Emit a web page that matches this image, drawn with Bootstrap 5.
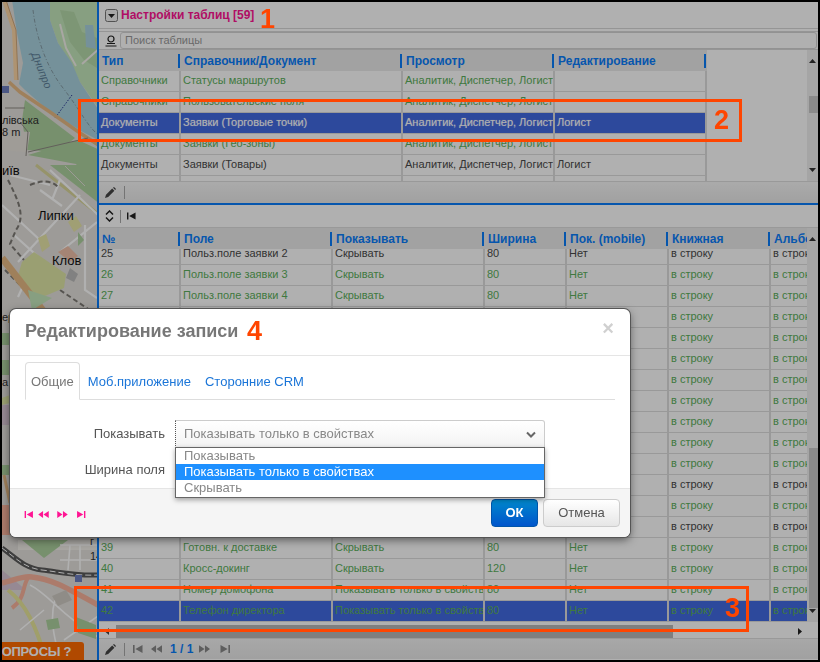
<!DOCTYPE html>
<html lang="ru">
<head>
    <meta charset="UTF-8">
    <meta name="viewport" content="width=device-width, initial-scale=1.0">
    <title>Настройки таблиц</title>
    <link href="https://cdn.jsdelivr.net/npm/bootstrap@5.3.2/dist/css/bootstrap.min.css" rel="stylesheet">
    <style>
        html, body { height: 100%; }
        body { background: #000; overflow: hidden; font-family: "Liberation Sans", Arial, sans-serif; font-size: 11px; }
        .app-frame { width: 816px; height: 658px; margin: 2px; background: #fff; }
        .map-pane { width: 95px; flex: none; overflow: hidden; }
        .map-pane svg { display: block; }
        .map-pane text { font-family: "Liberation Sans", Arial, sans-serif; }
        .work-pane { width: 721px; flex: none; border-left: 2px solid #0a7dfb; min-width: 0; }
        .title-bar { height: 27px; padding-left: 6px; gap: 3px; border-bottom: 1px solid #d8d8d8; }
        .title-text { color: #ff1493; font-size: 12px; font-weight: 700; }
        .search-bar { height: 19px; margin-top: 2px; border-top: 1px solid #d8d8d8; border-bottom: 1px solid #d8d8d8; padding-left: 6px; gap: 3px; }
        .search-box { flex: 1; height: 17px; margin-right: 1px; border: 1px solid #d4d4d4; border-radius: 3px; padding: 0 4px; font-size: 11px; line-height: 15px; color: #9a9a9a; }
        .grid-wrap { overflow: hidden; flex: 1; min-width: 0; }
        .grid-tbl.table { table-layout: fixed; margin: 0; border-collapse: separate; border-spacing: 0; color: #4a4a4a; font-size: 11px; }
        .grid-tbl.table > thead > tr > th { height: 21px; padding: 0 3px; font-size: 12px; font-weight: 700; line-height: 14px; color: #0a7dfb; background-color: #ebebeb;
            background-image: linear-gradient(#0a7dfb, #0a7dfb); background-size: 2px 14px; background-repeat: no-repeat; background-position: right 1px center; border: 0; white-space: nowrap; overflow: hidden; vertical-align: middle; }
        .grid-tbl.table > tbody > tr > td { height: 21px; padding: 0 2px; border: 0; border-right: 2px solid #dedede; border-bottom: 1px solid #dedede; background: #fff; white-space: nowrap; overflow: hidden; line-height: 19px; vertical-align: top; color: inherit; box-shadow: none; }
        .grid-tbl.table > tbody > tr.row-green > td { color: #5cb05c; }
        .grid-tbl.table > tbody > tr.row-sel > td { background: #426ae2; color: #fff; text-shadow: 0 0 1px rgba(255,255,255,.5); }
        .grid-tbl.table > tbody > tr.row-sel.row-green > td { color: #5cb05c; text-shadow: none; }
        .grid-tbl.table > tbody > tr.row-cut > td { height: 16px; line-height: 9px; }
        .grid-tbl.table > tbody > tr.row-stub > td { height: 6px; line-height: 6px; border-bottom: 0; }
        .top-grid { height: 132px; border-bottom: 1px solid #dedede; }
        .top-grid .grid-tbl { width: 608px; }
        .bottom-grid { height: 394px; }
        .bottom-grid .grid-tbl { width: 776px; }
        .vbar { width: 11px; flex: none; background: #efefef; }
        .vbar-thumb { background: #c9c9c9; margin-left: 2px; }
        .bar-arrow { flex: none; }
        .tool-bar { height: 21px; padding-left: 6px; gap: 6px; background: linear-gradient(#f7f7f7, #e9e9e9); }
        .tool-sep { width: 1px; height: 13px; background: #a8a8a8; margin: 0 2px; }
        .blue-rule { height: 2px; background: #0a7dfb; flex: none; }
        .tool-plain { height: 23px; padding-left: 6px; gap: 4px; background: #fff; border-bottom: 1px solid #dedede; }
        .hbar { height: 17px; flex: none; padding-top: 2px; background: #fff; border-bottom: 1px solid #dedede; width: 709px; }
        .hbar-thumb { width: 557px; height: 13px; margin-left: 4px; background: #b9b9b9; }
        .pager-num { color: #0a7dfb; font-size: 12px; font-weight: 700; margin-left: 2px; }
        .pager-near { margin-left: 2px; }
        .pager-foot { height: 20px; background: linear-gradient(#f3f3f3, #e9e9e9); }
        .ask-btn { left: 2px; top: 642px; width: 82px; height: 18px; background: #ff6a00; color: #fff; font-size: 13px; font-weight: 700; line-height: 20px; letter-spacing: -.3px; border-radius: 0 3px 0 0; overflow: hidden; white-space: nowrap; z-index: 10; }
        .ask-text { margin-left: -9px; }
        .modal-backdrop.dim-layer { --bs-backdrop-opacity: .31; --bs-backdrop-zindex: 1050; }
        .edit-dialog { left: 10px; top: 309px; width: 620px; height: 228px; z-index: 1060; }
        .edit-dialog .modal-content { height: 100%; background: #fff; border: 0; border-radius: 6px; box-shadow: 0 0 0 1px #555, 0 3px 8px rgba(0,0,0,.5); color: #555; }
        .edit-dialog .modal-header { height: 47px; flex: none; padding: 0 16px 0 15px; border-bottom: 1px solid #e5e5e5; }
        .dialog-title { font-size: 18px; font-weight: 700; color: #777; margin: 0; }
        .dialog-close { font-size: 20px; line-height: 20px; font-weight: 700; color: #d0d0d0; margin-top: -9px; margin-right: 0; }
        .edit-dialog .modal-body { flex: 1; padding: 6px 15px 0; font-size: 13px; }
        .edit-tabs { height: 38px; border-bottom: 1px solid #ddd; font-size: 13px; flex-wrap: nowrap; }
        .edit-tabs .nav-link { height: 38px; padding: 0 5px; line-height: 38px; margin-right: 2px; color: #1a75d8; border-radius: 4px 4px 0 0; }
        .edit-tabs .nav-link.active { color: #777; border-color: #ddd #ddd #fff; }
        .field-row { gap: 10px; }
        .field-label { width: 140px; text-align: right; flex: none; color: #555; font-size: 13px; }
        .field-select { width: 370px; height: 28px; padding: 0 8px; border: 1px solid #ccc; border-left: 1px dotted #555; border-radius: 0 3px 0 0; background: linear-gradient(#fff, #f3f3f3); color: #888; font-size: 13px; line-height: 26px; }
        .select-list { left: 165px; top: 138px; width: 370px; border: 1px solid #666; border-radius: 0; background: #fff; box-shadow: 0 2px 5px rgba(0,0,0,.35); z-index: 5; font-size: 13px; line-height: 16.7px; color: #888; }
        .select-list .list-group-item { border: 0; border-radius: 0; padding: 0 8px; background: transparent; color: inherit; }
        .select-list .list-group-item.active { background: #1e90ff; color: #fff; }
        .edit-dialog .modal-footer { height: 49px; flex: none; padding: 0 10px 0 14px; background: #f5f5f5; border-top: 1px solid #e5e5e5; border-radius: 0 0 6px 6px; flex-wrap: nowrap; justify-content: space-between; margin-top: auto; }
        .dialog-pager { fill: #ff1493; margin-top: 2px; }
        .dialog-btns { gap: 5px; }
        .btn-ok, .btn-cancel { height: 28px; padding: 0; font-size: 13px; line-height: 26px; border-radius: 4px; margin: 0; }
        .btn-ok { width: 47px; background: linear-gradient(#0088cc, #0055cc); border: 1px solid #0055aa; color: #fff; font-weight: 700; }
        .btn-cancel { width: 77px; background: linear-gradient(#fff, #e6e6e6); border: 1px solid #ccc; color: #555; }
        .mark-box { border: 3px solid #ff4500; z-index: 1080; pointer-events: none; }
        .mark-num { color: #ff4500; font-size: 27px; font-weight: 700; line-height: 27px; z-index: 1080; font-family: "Liberation Sans", Arial, sans-serif; }
    </style>
</head>
<body>
    <svg width="0" height="0" class="position-absolute">
        <defs>
            <symbol id="ic-first" viewBox="0 0 10 8"><path d="M0 0h1.6v8H0zM9.5 0v8L2.4 4z"/></symbol>
            <symbol id="ic-prev" viewBox="0 0 12 8"><path d="M5.5 0v8L0 4zM12 0v8L6 4z" /></symbol>
            <symbol id="ic-next" viewBox="0 0 12 8"><path d="M0 0v8l6-4zM6.5 0v8L12 4z"/></symbol>
            <symbol id="ic-last" viewBox="0 0 10 8"><path d="M8.4 0H10v8H8.4zM.5 0v8l7.1-4z"/></symbol>
            <symbol id="ic-pen" viewBox="0 0 11 11"><path d="M0 11l1-3.2L7.2 1.6l2.2 2.2L3.2 10zM8 .8L9 0l2 2-.8 1z" /></symbol>
        </defs>
    </svg>

    <div class="app-frame d-flex position-relative">
        <!-- Map -->
        <div class="map-pane">
            <svg width="95" height="658" viewBox="2 2 95 658">
                <rect x="0" y="0" width="100" height="662" fill="#e4e1dc"/>
                <path d="M50 0L100 0 100 110 80 82 70 62 58 43 50 20z" fill="#c4e6bb"/>
                <path d="M60 10l14 2 8 20 15 6v30L84 60 70 42z" fill="#add19e" opacity=".6"/>
                <path d="M85 25l8 0 3 24-10-2z" fill="#aad3df"/>
                <path d="M12 0L50 0 50 20 58 43 72 63 80 82 100 112 100 141 83 132 50 112 25 90 19 84 23 63 17 33z" fill="#aad3df"/>
                <path d="M82 64L100 48M60 24l6 24 10 18" stroke="#f4f2ec" stroke-width="2" fill="none"/>
                <path d="M33 10c3 25 12 55 30 78s25 40 37 48" stroke="#7a8b95" stroke-width=".8" stroke-dasharray="4 2 1 2" fill="none"/>
                <path d="M72 95L55 118" stroke="#2d3b9a" stroke-width="1" stroke-dasharray="1.5 1.5" fill="none"/>
                <path d="M25 100l50 38-18 14-30-2-5-30z" fill="#add19e"/>
                <path d="M28 155L78 140 100 150 100 200 76 164z" fill="#add19e"/>
                <path d="M50 165L100 165 100 204z" fill="#add19e"/>
                <path d="M85 186l-20-20" stroke="#e3e0d8" stroke-width="1"/>
                <path d="M4 0L14 30 16 80" stroke="#fcd6a4" stroke-width="4" fill="none"/>
                <path d="M4 0L14 30 16 80" stroke="#c99a6a" stroke-width=".8" fill="none" transform="translate(2 0)"/>
                <path d="M9 82L20 92 50 112 80 133 100 146" stroke="#e7ba85" stroke-width="3.5" fill="none"/>
                <path d="M36 165L60 184 97 213" stroke="#d9d69a" stroke-width="3" fill="none"/>
                <path d="M0 130L30 132 27 152 0 150z" fill="#e6e2db"/>
                <path d="M20 122l8 10-2 24M28 152l60-14M5 108h20" stroke="#8f8a84" stroke-width="1" fill="none"/>
                <!-- Липки -->
                <path d="M2 205L40 240M18 262L80 195M50 170L98 215M14 235l50 45M60 252L97 222M85 225V290l12 8M10 175l40 10M28 275l-10 22M60 180l-8 20M40 190l22 16" stroke="#fff" stroke-width="2.2" fill="none"/>
                <path d="M8 180c10 20 18 36 8 50l-6 14 14 16M30 185c10-4 20-6 28 2M60 290L97 315M5 270l40 40" stroke="#7d7a75" stroke-width="2" stroke-dasharray="5 3" fill="none"/>
                <path d="M22 262l12-10 32 22-2 14-24 10-24-16z" fill="#dfe6a6"/>
                <path d="M58 252l10-6 10 10-8 6z" fill="#f0c0a8"/>
                <path d="M68 222l8-6 6 10-8 6zM38 238l8-4 4 12-8 6z" fill="#e8e6a8"/>
                <path d="M2 258L44 312" stroke="#e7ba85" stroke-width="7" fill="none"/>
                <path d="M78 232l6 8-6 6z" fill="#add19e"/>
                <path d="M28 290l24 8-20 12z" fill="#c4e6bb"/>
                <path d="M70 268l8 6-4 8-8-4z" fill="#bbb"/>
                <!-- Strip left of the dialog -->
                <path d="M2 333h8v12H2zM2 360h8v15H2zM2 465h8v10H2z" fill="#add19e"/>
                <path d="M2 398l8-3v8l-8 2z" fill="#dfe6a6"/>
                <path d="M2 405h8v20H2z" fill="#d9c7d6"/>
                <path d="M4 475l6 28" stroke="#e7ba85" stroke-width="3" fill="none"/>
                <path d="M2 505h8v30H2z" fill="#f9b29c"/>
                <!-- South part -->
                <path d="M18 540h80v10H18z" fill="#f2efe9"/>
                <path d="M22 540l22 18 24-18z" fill="#add19e"/>
                <path d="M60 545h38M70 545l-2 25M80 545v25M60 560h38" stroke="#fff" stroke-width="1.6" fill="none"/>
                <path d="M2 570L26 590H2z" fill="#d9c7d6"/>
                <path d="M2 548c14 10 22 20 40 22s30 6 58 5" stroke="#5a5a5a" stroke-width="5" fill="none"/>
                <path d="M2 548c14 10 22 20 40 22s30 6 58 5" stroke="#fff" stroke-width="1" stroke-dasharray="6 3" fill="none"/>
                <path d="M2 583c10-2 22-8 30-6 18 2 30 8 66 28" stroke="#f9b29c" stroke-width="5.5" fill="none"/>
                <path d="M12 608c14-10 10-22 16-30" stroke="#f9b29c" stroke-width="4" fill="none"/>
                <path d="M8 590c18 14 28 36 38 70" stroke="#e8e69a" stroke-width="4" fill="none"/>
                <path d="M30 585c20 10 30 30 68 52M55 600c-6 20 0 40 5 60M20 630l24-20M64 640l34-24" stroke="#fff" stroke-width="1.6" fill="none"/>
                <path d="M76 617l20 8v14l-18-6z" fill="#add19e"/>
                <path d="M46 620l12-2 2 10-12 2z" fill="#add19e"/>
                <path d="M52 596l14-6 6 10-14 6z" fill="#cfcbc4"/>
                <rect x="2" y="86" width="7" height="7" fill="#6d7fc0"/>
                <rect x="75" y="575" width="7" height="7" fill="#6d7fc0"/>
                <text x="0" y="0" font-size="11" font-style="italic" fill="#5c7d96" transform="translate(31 54) rotate(68)">Днипро</text>
                <text x="2" y="124" font-size="11" fill="#2e2e2e">лівська</text>
                <text x="2" y="136" font-size="11" fill="#2e2e2e">8 m</text>
                <text x="2" y="175" font-size="13" fill="#111">иїв</text>
                <text x="38" y="220" font-size="13" fill="#111">Липки</text>
                <text x="52" y="265" font-size="13" fill="#111">Клов</text>
                <text x="2" y="321" font-size="11" fill="#333">ер</text>
                <text x="2" y="386" font-size="11" fill="#333">а</text>
                <text x="90" y="545" font-size="11" fill="#333">г</text>
                <text x="90" y="560" font-size="11" fill="#333">14</text>
            </svg>
        </div>

        <!-- Tables -->
        <div class="work-pane d-flex flex-column">
            <div class="title-bar d-flex align-items-center flex-none">
                <svg width="13" height="13" viewBox="0 0 13 13"><rect x=".5" y=".5" width="12" height="12" rx="2" fill="#f4f4f4" stroke="#777"/><path d="M3 5h7L6.5 9z" fill="#222"/></svg>
                <span class="title-text">Настройки таблиц [59]</span>
            </div>
            <div class="search-bar d-flex align-items-center">
                <svg width="12" height="12" viewBox="0 0 12 12"><circle cx="6" cy="4" r="3" fill="none" stroke="#222" stroke-width="1.2"/><path d="M2 8.5h8M.5 11h11" stroke="#222" stroke-width="1.2"/></svg>
                <div class="search-box">Поиск таблицы</div>
            </div>
            <div class="d-flex top-grid">
                <div class="grid-wrap">
                    <table class="table grid-tbl">
                        <colgroup><col style="width:82px"><col style="width:222px"><col style="width:152px"><col style="width:152px"></colgroup>
                        <thead><tr><th>Тип</th><th>Справочник/Документ</th><th>Просмотр</th><th>Редактирование</th></tr></thead>
                        <tbody id="topBody"></tbody>
                    </table>
                </div>
                <div class="vbar d-flex flex-column">
                    <svg class="bar-arrow mt-2" width="11" height="6" viewBox="0 0 11 6"><path d="M2 5h7L5.5 1z" fill="#333"/></svg>
                    <div class="vbar-thumb" style="height:17px;margin-top:32px"></div>
                    <svg class="bar-arrow mt-auto mb-2" width="11" height="6" viewBox="0 0 11 6"><path d="M2 1h7L5.5 5z" fill="#333"/></svg>
                </div>
            </div>
            <div class="tool-bar d-flex align-items-center">
                <svg width="11" height="11" fill="#444"><use href="#ic-pen"/></svg>
                <span class="tool-sep"></span>
            </div>
            <div class="blue-rule"></div>
            <div class="tool-plain d-flex align-items-center">
                <svg width="9" height="12" viewBox="0 0 9 12"><path d="M1 4.5L4.5 1 8 4.5M1 7.5L4.5 11 8 7.5" fill="none" stroke="#222" stroke-width="1.5"/></svg>
                <span class="tool-sep"></span>
                <svg width="9" height="8" fill="#222"><use href="#ic-first"/></svg>
            </div>
            <div class="d-flex bottom-grid">
                <div class="grid-wrap">
                    <table class="table grid-tbl">
                        <colgroup><col style="width:82px"><col style="width:152px"><col style="width:152px"><col style="width:82px"><col style="width:102px"><col style="width:102px"><col style="width:104px"></colgroup>
                        <thead><tr><th>№</th><th>Поле</th><th>Показывать</th><th>Ширина</th><th>Пок. (mobile)</th><th>Книжная</th><th>Альбомная</th></tr></thead>
                        <tbody id="bottomBody"></tbody>
                    </table>
                </div>
                <div class="vbar d-flex flex-column">
                    <svg class="bar-arrow mt-2" width="11" height="6" viewBox="0 0 11 6"><path d="M2 5h7L5.5 1z" fill="#333"/></svg>
                    <div class="vbar-thumb" style="height:160px;margin-top:206px"></div>
                    <svg class="bar-arrow mt-auto mb-2" width="11" height="6" viewBox="0 0 11 6"><path d="M2 1h7L5.5 5z" fill="#333"/></svg>
                </div>
            </div>
            <div class="d-flex">
                <div class="hbar d-flex align-items-center">
                    <svg width="9" height="9" viewBox="0 0 9 9" class="ms-1"><path d="M6 1v7L2 4.5z" fill="#444"/></svg>
                    <div class="hbar-thumb"></div>
                    <svg class="ms-auto me-1" width="9" height="9" viewBox="0 0 9 9"><path d="M3 1v7l4-3.5z" fill="#222"/></svg>
                </div>
                <div class="flex-fill hbar"></div>
            </div>
            <div class="tool-bar pager-foot d-flex align-items-center">
                <svg width="11" height="11" fill="#444"><use href="#ic-pen"/></svg>
                <span class="tool-sep"></span>
                <svg width="10" height="8" fill="#888"><use href="#ic-first"/></svg>
                <svg width="11" height="8" fill="#888" class="pager-near"><use href="#ic-prev"/></svg>
                <span class="pager-num">1 / 1</span>
                <svg width="11" height="8" fill="#888"><use href="#ic-next"/></svg>
                <svg width="10" height="8" fill="#888" class="ms-1"><use href="#ic-last"/></svg>
            </div>
        </div>
    </div>

    <div class="ask-btn position-absolute"><span class="ask-text">ВОПРОСЫ ?</span></div>

    <div class="modal-backdrop show dim-layer"></div>

    <!-- Dialog -->
    <div class="edit-dialog position-absolute">
        <div class="modal-content position-relative">
            <div class="modal-header justify-content-between">
                <h5 class="dialog-title">Редактирование записи</h5>
                <span class="dialog-close">×</span>
            </div>
            <div class="modal-body d-flex flex-column">
                <ul class="nav nav-tabs edit-tabs">
                    <li class="nav-item"><a class="nav-link active">Общие</a></li>
                    <li class="nav-item"><a class="nav-link">Моб.приложение</a></li>
                    <li class="nav-item"><a class="nav-link">Сторонние CRM</a></li>
                </ul>
                <div class="field-row d-flex align-items-center mt-3 pt-1">
                    <div class="field-label">Показывать</div>
                    <div class="field-select d-flex justify-content-between align-items-center">
                        <span>Показывать только в свойствах</span>
                        <svg width="10" height="7" viewBox="0 0 10 7"><path d="M1 1.5L5 5.5 9 1.5" fill="none" stroke="#666" stroke-width="2"/></svg>
                    </div>
                </div>
                <div class="field-row d-flex align-items-center mt-2 pt-1">
                    <div class="field-label">Ширина поля</div>
                </div>
            </div>
            <div class="list-group select-list position-absolute">
                <div class="list-group-item">Показывать</div>
                <div class="list-group-item active">Показывать только в свойствах</div>
                <div class="list-group-item">Скрывать</div>
            </div>
            <div class="modal-footer">
                <div class="dialog-pager d-flex align-items-center gap-1">
                    <svg width="10" height="7"><use href="#ic-first"/></svg>
                    <svg width="11" height="7"><use href="#ic-prev"/></svg>
                    <svg width="11" height="7" class="ms-1"><use href="#ic-next"/></svg>
                    <svg width="10" height="7" class="ms-1"><use href="#ic-last"/></svg>
                </div>
                <div class="dialog-btns d-flex">
                    <button class="btn btn-ok" type="button">ОК</button>
                    <button class="btn btn-cancel" type="button">Отмена</button>
                </div>
            </div>
        </div>
    </div>

    <!-- Annotations -->
    <div class="mark-box position-absolute" style="left:78px;top:99px;width:664px;height:43px"></div>
    <div class="mark-box position-absolute" style="left:74px;top:586px;width:675px;height:46px"></div>
    <span class="mark-num position-absolute" style="left:260px;top:6px">1</span>
    <span class="mark-num position-absolute" style="left:714px;top:107px">2</span>
    <span class="mark-num position-absolute" style="left:725px;top:595px">3</span>
    <span class="mark-num position-absolute" style="left:247px;top:318px">4</span>

    <script src="https://cdn.jsdelivr.net/npm/bootstrap@5.3.2/dist/js/bootstrap.bundle.min.js"></script>
    <script>
        const roles = 'Аналитик, Диспетчер, Логист';
        const topRows = [
            ['Справочники', 'Статусы маршрутов', roles, '', 'row-green'],
            ['Справочники', 'Пользовательские поля', roles, '', 'row-green'],
            ['Документы', 'Заявки (Торговые точки)', roles, 'Логист', 'row-sel'],
            ['Документы', 'Заявки (Гео-зоны)', roles, '', 'row-green'],
            ['Документы', 'Заявки (Товары)', roles, 'Логист', ''],
            ['', '', '', '', 'row-stub']
        ];

        // поле, показывать, ширина
        const fields = {
            25: ['Польз.поле заявки 2', 'Скрывать', '80'], 26: ['Польз.поле заявки 3', 'Скрывать', '80'],
            27: ['Польз.поле заявки 4', 'Скрывать', '80'],
            39: ['Готовн. к доставке', 'Скрывать', '80'], 40: ['Кросс-докинг', 'Скрывать', '120'],
            41: ['Номер домофона', 'Показывать только в свойствах', '80'],
            42: ['Телефон директора', 'Показывать только в свойствах', '80']
        };

        function fillRows(id, rows) {
            document.getElementById(id).innerHTML = rows.map(r => {
                const cls = r[r.length - 1];
                const cells = r.slice(0, -1).map(c => `<td>${c}</td>`).join('');
                return `<tr class="${cls}">${cells}</tr>`;
            }).join('');
        }

        const bottomRows = [];
        for (let n = 25; n <= 42; n++) {
            const f = fields[n];
            let cls = 'row-green';
            if (n === 25) cls = 'row-cut';
            if (n === 36 || n === 38) cls = '';
            if (n === 42) cls = 'row-green row-sel';
            // строки 28-38 под диалогом, видны только правые колонки
            const left = f ? [n, f[0], f[1], f[2], 'Нет'] : ['', '', '', '', ''];
            bottomRows.push([...left, 'в строку', 'в строку', cls]);
        }

        fillRows('topBody', topRows);
        fillRows('bottomBody', bottomRows);
    </script>
</body>
</html>
